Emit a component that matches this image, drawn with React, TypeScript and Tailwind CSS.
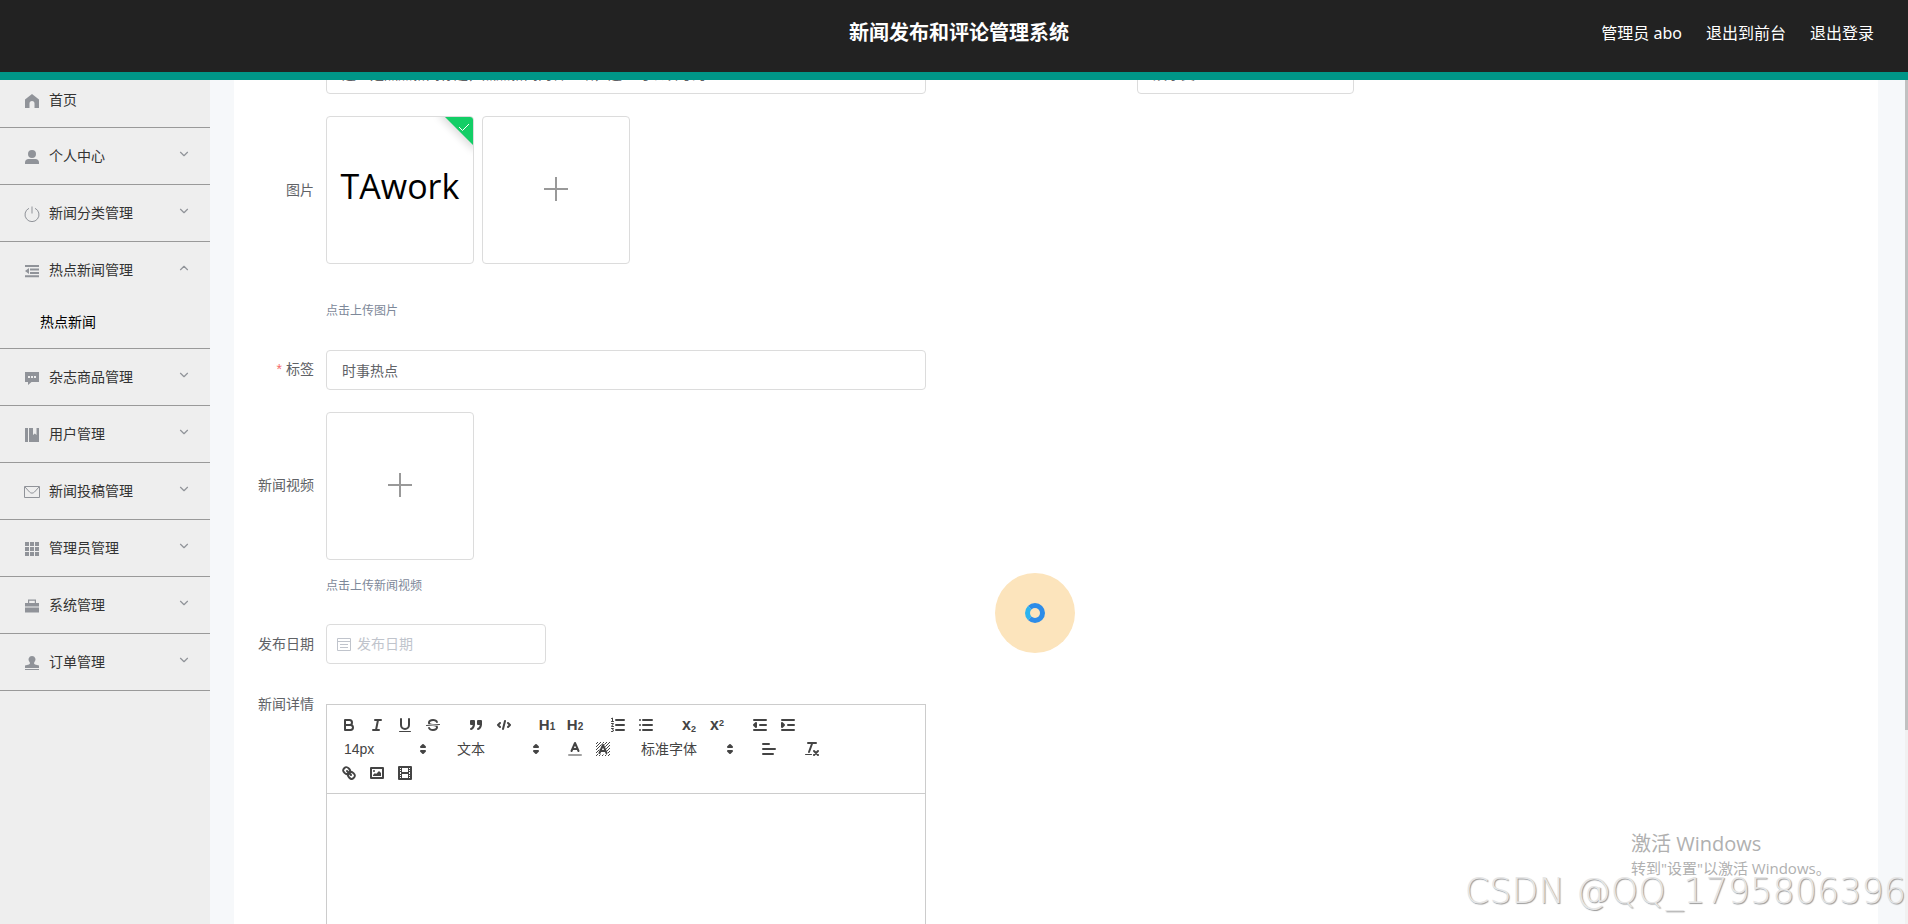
import React, { useState } from 'react';
import { ChevronDown, ChevronUp } from 'lucide-react';

interface MenuItem {
  name: string;
  icon: React.ReactNode;
  children?: string[];
}

const MenuIcon: React.FC<{ children: React.ReactNode }> = ({ children }) => (
  <svg className="w-4 h-4 mt-0.5 shrink-0 text-[#909399]" viewBox="0 0 16 16" fill="currentColor">
    {children}
  </svg>
);

const menus: MenuItem[] = [
  {
    name: '个人中心',
    icon: <path d="M8 1a4 4 0 1 1 0 8 4 4 0 0 1 0-8zM1 15v-1.500c0-2 1.500-3.500 3.500-3.500h7c2 0 3.500 1.500 3.500 3.500V15z" />,
    children: ['个人信息'],
  },
  {
    name: '新闻分类管理',
    icon: <path d="M5 2.300a7 7 0 1 0 6 0M8 .5v7" fill="none" stroke="currentColor" />,
    children: ['新闻分类'],
  },
  {
    name: '热点新闻管理',
    icon: <path d="M1 2h14v2H1zM6 5.500h9v2H6zM6 9h9v2H6zM1 12.200h14v2H1zM5 5v6L1 8z" />,
    children: ['热点新闻'],
  },
  {
    name: '杂志商品管理',
    icon: <path fillRule="evenodd" d="M1 2h14v10H7.500L4 15v-3H1zM4 6v2h2V6zM7 6v2h2V6zM10 6v2h2V6z" />,
    children: ['杂志商品'],
  },
  {
    name: '用户管理',
    icon: <path fillRule="evenodd" d="M1 1h3v14H1zM5 1h10v14H5zM9 1v7l1.800-1.500L12.500 8V1z" />,
    children: ['用户'],
  },
  {
    name: '新闻投稿管理',
    icon: <path d="M.5 2.500h15v11H.5zM1 3l4.500 5c1.500 1.500 3.500 1.500 5 0L15 3" fill="none" stroke="currentColor" />,
    children: ['新闻投稿'],
  },
  {
    name: '管理员管理',
    icon: <path d="M1 1h4v4H1zM6 1h4v4H6zM11 1h4v4h-4zM1 6h4v4H1zM6 6h4v4H6zM11 6h4v4h-4zM1 11h4v4H1zM6 11h4v4H6zM11 11h4v4h-4z" />,
    children: ['管理员'],
  },
  {
    name: '系统管理',
    icon: <path fillRule="evenodd" d="M4 1.500h8V5h3v3.500H1V5h3zM5.200 2.700V5h5.600V2.700zM1 9.500h14v5H1z" />,
    children: ['系统简介'],
  },
  {
    name: '订单管理',
    icon: <path d="M8 1a3.500 3.500 0 0 1 2.500 6c-.8 1-.5 2 .5 2.500l4 1V13H1v-2.500l4-1C6 9 6.300 8 5.500 7A3.500 3.500 0 0 1 8 1zM1 14h14v1H1z" />,
    children: ['订单'],
  },
];

const Sidebar: React.FC = () => {
  const [open, setOpen] = useState('热点新闻管理');

  return (
    <aside className="w-[210px] shrink-0 bg-[#eee] text-sm text-[#333]">
      <a href="#home" className="flex items-center gap-[9px] h-12 pl-6 pb-2 border-b border-[#999]">
        <MenuIcon>
          <path d="M8 1l7 5.500V15h-4.500v-4.500a2.500 2.500 0 0 0-5 0V15H1V6.500z" />
        </MenuIcon>
        <span>首页</span>
      </a>
      {menus.map((m) => (
        <div key={m.name} className="border-b border-[#999]">
          <button
            onClick={() => setOpen(open === m.name ? '' : m.name)}
            className="flex items-center gap-[9px] w-full h-14 pl-6 pr-[19px] text-left"
          >
            <MenuIcon>{m.icon}</MenuIcon>
            <span className="flex-1">{m.name}</span>
            {open === m.name ? (
              <ChevronUp className="w-3.5 h-3.5 mb-1 text-[#909399]" strokeWidth={2} />
            ) : (
              <ChevronDown className="w-3.5 h-3.5 mb-1 text-[#909399]" strokeWidth={2} />
            )}
          </button>
          {open === m.name && m.children?.map((c) => (
            <a key={c} href="#list" className="block h-[50px] pl-10 leading-[48px] text-black">{c}</a>
          ))}
        </div>
      ))}
    </aside>
  );
};

const PlusTile: React.FC<{ label: string }> = ({ label }) => (
  <button aria-label={label} className="flex items-center justify-center w-[148px] h-[148px] pb-0.5 bg-white border border-[#dcdcdc] rounded">
    <svg className="w-6 h-6 text-[#999]" viewBox="0 0 24 24" stroke="currentColor" strokeWidth={2}>
      <path d="M12 0v24M0 12h24" />
    </svg>
  </button>
);

// Toolbar glyphs share one 18px grid
const ToolIcon: React.FC<{ children: React.ReactNode }> = ({ children }) => (
  <svg className="w-[18px] h-[18px]" viewBox="0 0 18 18" fill="none" stroke="#444" strokeWidth={2} strokeLinecap="round" strokeLinejoin="round">
    {children}
  </svg>
);

const Tool: React.FC<{ label: string; children: React.ReactNode }> = ({ label, children }) => (
  <button aria-label={label} className="flex items-center justify-center w-7 h-6">
    {children}
  </button>
);

const Group: React.FC<{ children: React.ReactNode }> = ({ children }) => (
  <div className="flex mr-[15px]">{children}</div>
);

const Picker: React.FC<{ label: string; options: string[]; wide?: boolean }> = ({ label, options, wide }) => (
  <div className={wide ? 'relative w-[108px] h-6' : 'relative w-[98px] h-6'}>
    <select aria-label={label} className="w-full h-6 pl-[9px] appearance-none bg-transparent text-sm text-[#444] outline-none">
      {options.map((o) => (
        <option key={o}>{o}</option>
      ))}
    </select>
    <svg className="absolute right-px top-[3px] w-[18px] h-[18px] pointer-events-none" viewBox="0 0 18 18" fill="#444" stroke="#444" strokeWidth={2} strokeLinejoin="round">
      <path d="M7 11l2 2 2-2zM7 7l2-2 2 2z" />
    </svg>
  </div>
);

const Editor: React.FC = () => (
  <div className="w-[600px] mt-[18px] border border-[#ccc]">
    <div className="flex flex-wrap p-2 border-b border-[#ccc] text-[#444]">
      <Group>
        <Tool label="加粗">
          <ToolIcon>
            <path d="M5,4H9.5A2.5,2.5,0,0,1,9.5,9H5V4Z" />
            <path d="M5,9h5.5A2.5,2.5,0,0,1,10.5,14H5V9Z" />
          </ToolIcon>
        </Tool>
        <Tool label="斜体">
          <ToolIcon><path d="M7 4h6M5 14h6M8 14l2-10" /></ToolIcon>
        </Tool>
        <Tool label="下划线">
          <ToolIcon>
            <path d="M5,3V9a4,4,0,0,0,8,0V3" />
            <rect x="3" y="15" width="12" height="1" rx="0.5" fill="#444" stroke="none" />
          </ToolIcon>
        </Tool>
        <Tool label="删除线">
          <ToolIcon>
            <path d="M15.500 8.500l-13 1" strokeWidth={1} />
            <path stroke="none" fill="#444" d="M9.007,8C6.542,7.791,6,7.519,6,6.5,6,5.792,7.283,5,9,5c1.571,0,2.765.679,2.969,1.309a1,1,0,0,0,1.9-.617C13.356,4.106,11.354,3,9,3,6.2,3,4,4.538,4,6.5a3.2,3.2,0,0,0,.5,1.843Z" />
            <path stroke="none" fill="#444" d="M8.984,10C11.457,10.208,12,10.479,12,11.5c0,0.708-1.283,1.5-3,1.5-1.571,0-2.765-.679-2.969-1.309a1,1,0,1,0-1.9.617C4.644,13.894,6.646,15,9,15c2.8,0,5-1.538,5-3.5a3.2,3.2,0,0,0-.5-1.843Z" />
          </ToolIcon>
        </Tool>
      </Group>
      <Group>
        <Tool label="引用">
          <ToolIcon>
            <g fill="#444">
              <rect x="4" y="5" width="3" height="3" />
              <rect x="11" y="5" width="3" height="3" />
              <path d="M7,8c0,4.031-3,5-3,5" />
              <path d="M14,8c0,4.031-3,5-3,5" />
            </g>
          </ToolIcon>
        </Tool>
        <Tool label="代码">
          <ToolIcon><path d="M5 7L3 9l2 2M13 7l2 2-2 2M10 5L8 13" /></ToolIcon>
        </Tool>
      </Group>
      <Group>
        <Tool label="一级标题">
          <span className="pt-0.5 text-[15px] font-bold leading-5">H<span className="text-[10px]">1</span></span>
        </Tool>
        <Tool label="二级标题">
          <span className="pt-0.5 text-[15px] font-bold leading-5">H<span className="text-[10px]">2</span></span>
        </Tool>
      </Group>
      <Group>
        <Tool label="有序列表">
          <ToolIcon>
            <path d="M7 4h8M7 9h8M7 14h8" />
            <path strokeWidth={1} d="M2.500 2.500l1-.5v3M2.500 5.500h2M2.500 7.500h2l-2 3h2M2.500 12.500h2l-1 1.200 1 .3-.5 1.500H2.500" />
          </ToolIcon>
        </Tool>
        <Tool label="无序列表">
          <ToolIcon><path d="M6 4h9M6 9h9M6 14h9M3 4h0M3 9h0M3 14h0" /></ToolIcon>
        </Tool>
      </Group>
      <Group>
        <Tool label="下标">
          <span className="text-base font-bold leading-6">x<sub className="text-[9px]">2</sub></span>
        </Tool>
        <Tool label="上标">
          <span className="text-base font-bold leading-6">x<sup className="text-[9px]">2</sup></span>
        </Tool>
      </Group>
      <Group>
        <Tool label="减少缩进">
          <ToolIcon><path d="M3 14h12M3 4h12M9 9h6" /><path fill="#444" d="M5 7v4L3 9z" /></ToolIcon>
        </Tool>
        <Tool label="增加缩进">
          <ToolIcon><path d="M3 14h12M3 4h12M9 9h6" /><path fill="#444" d="M3 7v4l2-2z" /></ToolIcon>
        </Tool>
      </Group>
      <Group>
        <Picker label="字号" options={['14px', '16px', '18px']} />
      </Group>
      <Group>
        <Picker label="段落格式" options={['文本', '标题1', '标题2']} />
      </Group>
      <Group>
        <Tool label="字体颜色">
          <ToolIcon>
            <path d="M3 15h12" opacity="0.5" />
            <path d="M5.500 11L9 3l3.500 8M11.600 9H6.400" />
          </ToolIcon>
        </Tool>
        <Tool label="背景颜色">
          <ToolIcon>
            <defs>
              <pattern id="hatch" width="3" height="3" patternUnits="userSpaceOnUse">
                <path d="M-1 1l2-2M0 3l3-3M2 4l2-2" strokeWidth={1} />
              </pattern>
            </defs>
            <rect x="2" y="2" width="14" height="14" fill="url(#hatch)" stroke="none" />
            <path d="M5.500 13L9 5l3.500 8z" fill="#fff" stroke="#fff" strokeWidth={3} />
            <path d="M5.500 13L9 5l3.500 8M11.600 11H6.400" />
          </ToolIcon>
        </Tool>
      </Group>
      <Group>
        <Picker label="字体" options={['标准字体', '宋体', '黑体']} wide />
      </Group>
      <Group>
        <Tool label="对齐">
          <ToolIcon><path d="M3 9h12M3 14h10M3 4h6" /></ToolIcon>
        </Tool>
      </Group>
      <Group>
        <Tool label="清除格式">
          <ToolIcon>
            <path d="M5 3h8M6 12L9.300 3M11 11l4 4M15 11l-4 4" />
            <rect x="2" y="14" width="7" height="1" rx="0.5" fill="#444" stroke="none" />
          </ToolIcon>
        </Tool>
      </Group>
      <Group>
        <Tool label="链接">
          <ToolIcon>
            <path d="M7 7l4 4" />
            <path d="M8.9,4.577a3.476,3.476,0,0,1,.36,4.679A3.476,3.476,0,0,1,4.577,8.9C3.185,7.5,2.035,6.4,4.217,4.217S7.5,3.185,8.9,4.577Z" />
            <path d="M13.423,9.1a3.476,3.476,0,0,0-4.679-.36,3.476,3.476,0,0,0,.36,4.679c1.392,1.392,2.5,2.542,4.679.36S14.815,10.5,13.423,9.1Z" />
          </ToolIcon>
        </Tool>
        <Tool label="插入图片">
          <ToolIcon>
            <rect x="3" y="4" width="12" height="10" />
            <g fill="#444" stroke="none">
              <circle cx="6" cy="7" r="1" />
              <path d="M5 12v-1l2-2 1 1 3-3 2 2v3z" />
            </g>
          </ToolIcon>
        </Tool>
        <Tool label="插入视频">
          <ToolIcon>
            <rect x="3" y="3" width="12" height="12" />
            <path fill="#444" stroke="none" d="M5 3h1v12H5zM12 3h1v12h-1zM5 8h8v2H5zM3 5h3v1H3zM3 7h3v1H3zM3 10h3v1H3zM3 12h3v1H3zM12 5h3v1h-3zM12 7h3v1h-3zM12 10h3v1h-3zM12 12h3v1h-3z" />
          </ToolIcon>
        </Tool>
      </Group>
    </div>
    <textarea id="detail" className="block w-full h-[400px] px-4 py-3 text-sm resize-none outline-none" />
  </div>
);

const NewsForm: React.FC = () => {
  const [title, setTitle] = useState('这里是热点新闻标题，热点新闻内容介绍，这里可以填写的');
  const [category, setCategory] = useState('娱乐类');
  const [tag, setTag] = useState('时事热点');

  return (
    <form className="flex flex-col gap-[22px] -mt-[26px] text-sm text-[#606266]">
      <div className="flex">
        <input
          aria-label="标题"
          value={title}
          onChange={(e) => setTitle(e.target.value)}
          className="w-[600px] h-10 ml-[92px] px-[15px] pb-0.5 border border-[#dcdcdc] rounded outline-none"
        />
        <input
          aria-label="新闻分类"
          value={category}
          onChange={(e) => setCategory(e.target.value)}
          className="w-[217px] h-10 ml-[211px] px-[15px] pb-0.5 border border-[#dcdcdc] rounded outline-none"
        />
      </div>

      <div className="flex">
        <span className="w-[92px] pr-3 text-right leading-[148px]">图片</span>
        <div>
          <div className="flex gap-2 mb-7">
            <div className="relative flex items-center justify-center w-[148px] h-[148px] border border-[#dcdcdc] rounded overflow-hidden">
              <span className="pb-2 font-['Open_Sans'] text-[34px] text-black">TAwork</span>
              <span className="absolute -right-[17px] -top-[7px] w-[46px] h-6 rotate-45 bg-[#13ce66] shadow-[0_1px_8px_2px_rgba(0,0,0,0.15)]" />
              <svg className="absolute right-[3px] top-[4px] w-3 h-3" viewBox="0 0 12 12" fill="none" stroke="#fff">
                <path d="M1 6l3.500 3.500L11 3" />
              </svg>
            </div>
            <PlusTile label="上传图片" />
          </div>
          <p className="text-xs leading-[38px] -mb-0.5 text-[#7d8899]">点击上传图片</p>
        </div>
      </div>

      <div className="flex">
        <label htmlFor="tag" className="w-[92px] pr-3 text-right leading-[38px]">
          <span className="mr-1 text-[#f56c6c]">*</span>标签
        </label>
        <input
          id="tag"
          value={tag}
          onChange={(e) => setTag(e.target.value)}
          className="w-[600px] h-10 px-[15px] border border-[#dcdcdc] rounded outline-none"
        />
      </div>

      <div className="flex">
        <span className="w-[92px] pr-3 text-right leading-[146px]">新闻视频</span>
        <div>
          <div className="mb-[7px]">
            <PlusTile label="上传新闻视频" />
          </div>
          <p className="text-xs leading-[38px] -mb-[3px] text-[#7d8899]">点击上传新闻视频</p>
        </div>
      </div>

      <div className="flex">
        <label htmlFor="date" className="w-[92px] pr-3 text-right leading-10">发布日期</label>
        <div className="flex items-center gap-1.5 w-[220px] h-10 pl-2.5 border border-[#dcdcdc] rounded">
          <svg className="w-3.5 h-3.5 shrink-0 text-[#c0c4cc]" viewBox="0 0 14 14" fill="none" stroke="currentColor">
            <path d="M.5 1.500h13v12H.5zM.5 4.500h13M3 7.500h8M3 10.500h8" />
          </svg>
          <input id="date" placeholder="发布日期" className="flex-1 min-w-0 outline-none placeholder-[#c0c4cc]" />
        </div>
      </div>

      <div className="flex">
        <label htmlFor="detail" className="w-[92px] pr-3 text-right leading-9">新闻详情</label>
        <Editor />
      </div>
    </form>
  );
};

const App: React.FC = () => {
  return (
    <div className="relative flex flex-col h-screen overflow-hidden font-['Liberation_Sans','Noto_Sans_CJK_SC',sans-serif]">
      <header className="grid grid-cols-[1fr_auto_1fr] items-center h-20 shrink-0 pl-11 pr-[34px] pb-1.5 bg-[#222] border-b-8 border-[#009688] text-white font-['Noto_Sans','Noto_Sans_CJK_SC',sans-serif]">
        <span />
        <h1 className="text-xl font-bold">新闻发布和评论管理系统</h1>
        <nav className="flex justify-end gap-6 text-base">
          <span>管理员 abo</span>
          <a href="#front">退出到前台</a>
          <a href="#logout">退出登录</a>
        </nav>
      </header>

      <div className="flex flex-1 min-h-0 bg-[#f6f8fa]">
        <Sidebar />
        <main className="flex-1 ml-6 mr-[27px] bg-white overflow-hidden">
          <NewsForm />
        </main>
        <div className="w-[3px] bg-[#f1f1f1]">
          <div className="h-[650px] bg-[#c1c1c1]" />
        </div>
      </div>

      {/* Busy cursor */}
      <div className="absolute left-[995px] top-[573px] flex items-center justify-center w-20 h-20 rounded-full bg-[#fce4bc] pointer-events-none">
        <div className="w-5 h-5 rounded-full border-[5px] border-[#2d8ce8] border-l-[#2cb4f0]" />
      </div>

      <div className="absolute right-20 bottom-[46px] w-[197px] whitespace-nowrap text-[#b0b0b0] pointer-events-none font-['Open_Sans','Noto_Sans_CJK_SC',sans-serif]">
        <p className="text-xl leading-7">激活 Windows</p>
        <p className="text-[15px] leading-5">转到"设置"以激活 Windows。</p>
      </div>
      <p className="absolute right-0.5 bottom-[15px] font-['DejaVu_Sans'] font-extralight text-[35px] leading-9 whitespace-nowrap text-[#e6e6e6] [text-shadow:1px_1px_1px_#999] pointer-events-none">
        CSDN @QQ_1795806396
      </p>
    </div>
  );
};

export default App;
